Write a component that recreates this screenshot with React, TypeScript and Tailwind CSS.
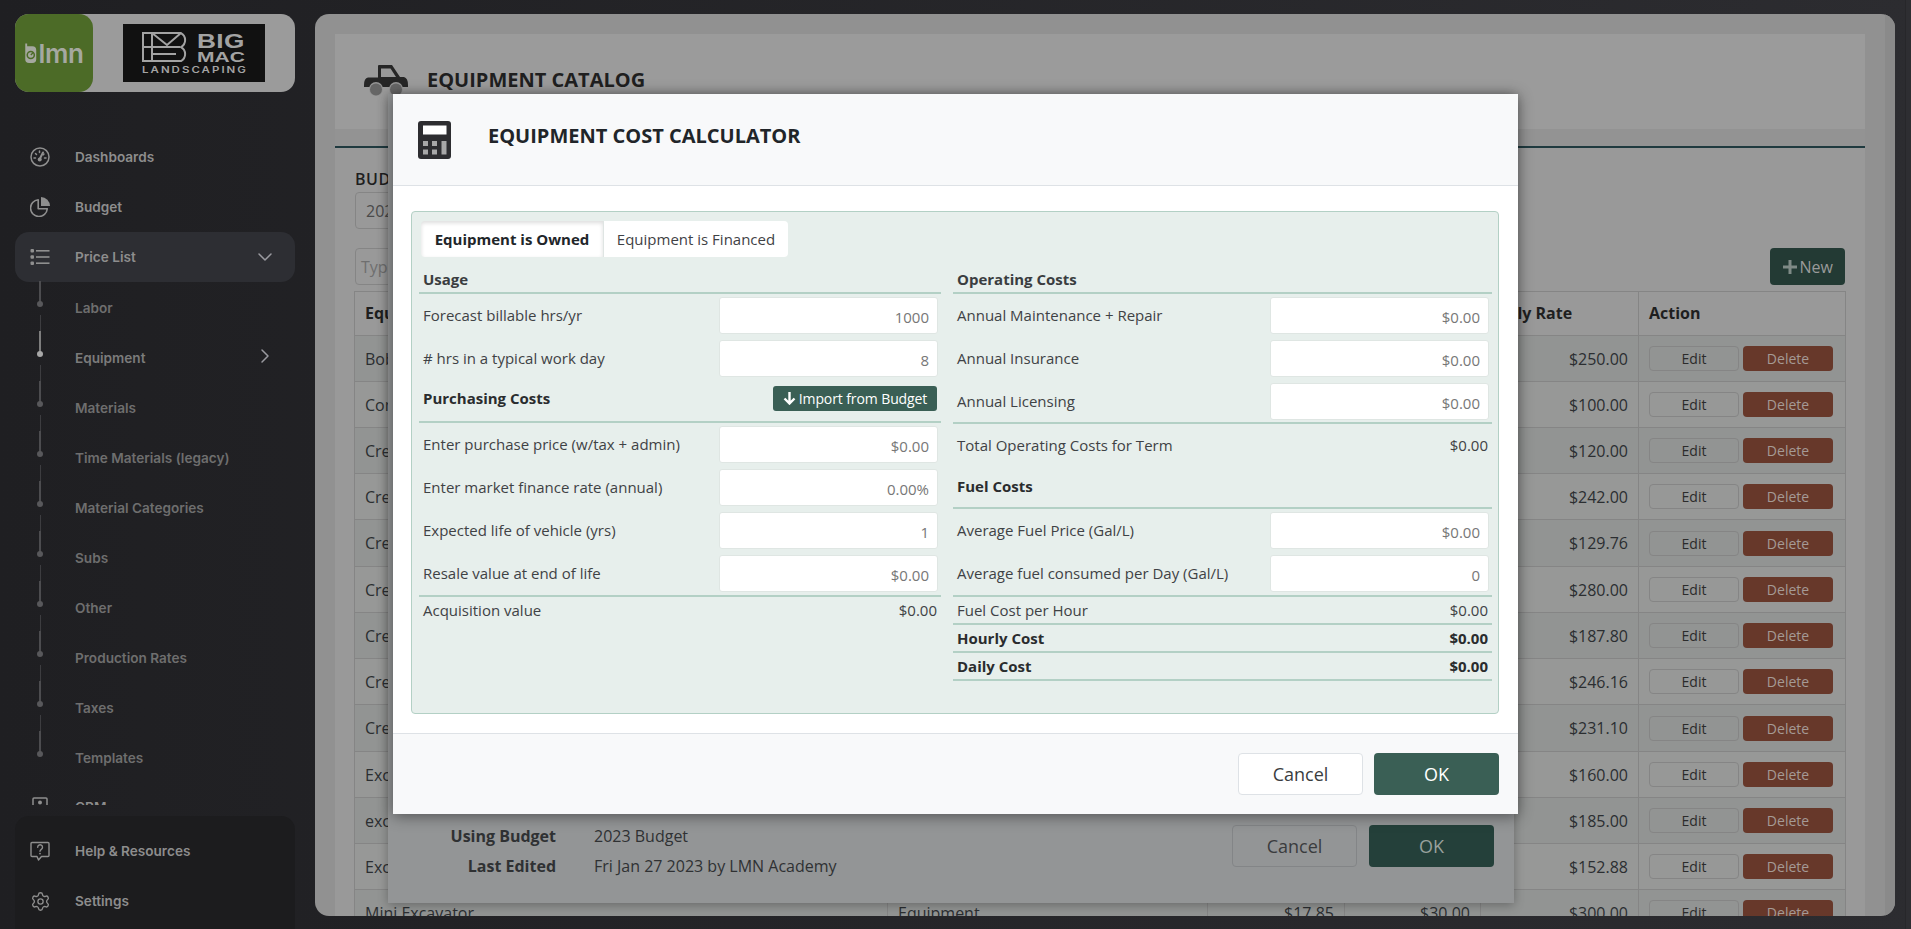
import React from "react";
import { ChevronDown, ChevronRight, Settings } from "lucide-react";

const GaugeIcon = () => (
  <svg width="20" height="20" viewBox="0 0 20 20" fill="none" stroke="#8f8f8f" strokeWidth="1.5">
    <circle cx="10" cy="10" r="9" />
    <path d="M10 11.500 L13 5.500" strokeWidth="2" strokeLinecap="round" />
    <circle cx="9.700" cy="12.500" r="2" fill="#8f8f8f" stroke="none" />
    <path d="M4 11h1.500M5.500 6.500l1 1M9.500 4v1.500M14 7l-.6.6M14.500 11H16" strokeLinecap="round" />
  </svg>
);

const PieIcon = () => (
  <svg width="20" height="20" viewBox="0 0 20 20" fill="none">
    <path d="M11 0a9 9 0 0 1 9 9h-9z" fill="#8f8f8f" />
    <path d="M8.200 2.700a8.400 8.400 0 1 0 9.100 9.100H8.200z" stroke="#8f8f8f" strokeWidth="1.600" strokeLinejoin="round" />
  </svg>
);

const ListIcon = () => (
  <svg width="20" height="18" viewBox="0 0 20 18" fill="#8f8f8f">
    <rect x="0.500" y="1" width="3.500" height="3.500" rx="1" />
    <rect x="0.500" y="7.200" width="3.500" height="3.500" rx="1" />
    <rect x="0.500" y="13.400" width="3.500" height="3.500" rx="1" />
    <rect x="6" y="2" width="13.500" height="1.600" />
    <rect x="6" y="8.200" width="13.500" height="1.600" />
    <rect x="6" y="14.400" width="13.500" height="1.600" />
  </svg>
);

const HelpIcon = () => (
  <svg width="20" height="20" viewBox="0 0 20 20" fill="none" stroke="#8f8f8f" strokeWidth="1.400">
    <path d="M2 1.500h16a1 1 0 0 1 1 1v12a1 1 0 0 1-1 1h-6.500L8.500 19l-1.500-3.500H2a1 1 0 0 1-1-1v-12a1 1 0 0 1 1-1z" strokeLinejoin="round" />
    <path d="M7.700 6.200a2.400 2.400 0 1 1 3.600 2.100c-.8.500-1.300 1-1.300 1.900" strokeLinecap="round" />
    <circle cx="10" cy="12.600" r=".9" fill="#8f8f8f" stroke="none" />
  </svg>
);

const CrmIcon = () => (
  <svg width="16" height="20" viewBox="0 0 16 20" fill="none" stroke="#8f8f8f" strokeWidth="1.500">
    <rect x="1" y="1" width="14" height="18" rx="1" />
    <circle cx="8" cy="5.500" r="2" fill="#8f8f8f" stroke="none" />
  </svg>
);

const LmnMark = () => (
  <svg width="13" height="21" viewBox="0 0 13 22" fill="none">
    <path d="M1 0.500h2v3h5.500a4 4 0 0 1 4 4V17a4 4 0 0 1-4 4H5a4 4 0 0 1-4-4z" fill="#a5a8a0" />
    <circle cx="6.800" cy="12.500" r="3.700" fill="none" stroke="#4c6b27" strokeWidth="1.600" />
    <path d="M6.800 12.500l2.600-2.600" stroke="#4c6b27" strokeWidth="1.400" />
  </svg>
);

const BigMacMark = () => (
  <svg width="48" height="30" viewBox="0 0 48 30" fill="none" stroke="#a3a3a3" strokeWidth="2">
    <path d="M1 1h38a8 8 0 0 1 0 14 8 8 0 0 1 0 14H1z" />
    <path d="M10 1v14h28M1 15h9M10 15v7h24M10 22v7M10 1l15 12L39 1" />
  </svg>
);

const TruckIcon = () => (
  <svg width="44" height="31" viewBox="0 0 44 31">
    <path d="M0 20Q0 13 4 12.500H14V1a1 1 0 0 1 1-1H28L36 12H40Q44 13 44 20V22H0z" fill="#262626" />
    <path d="M17 3.500H26.500L32 12H17z" fill="#999999" />
    <circle cx="12" cy="24" r="7" fill="#949494" />
    <circle cx="32" cy="24" r="7" fill="#949494" />
    <circle cx="12" cy="24.500" r="6" fill="#666666" />
    <circle cx="32" cy="24.500" r="6" fill="#666666" />
  </svg>
);

const CalculatorIcon = () => (
  <svg width="33" height="38" viewBox="0 0 33 38">
    <rect width="33" height="38" rx="3" fill="#2d2d30" />
    <rect x="5" y="4.500" width="23.500" height="9" fill="#ffffff" />
    <rect x="5" y="20" width="5" height="5" fill="#a8a8a8" />
    <rect x="14" y="20" width="5" height="5" fill="#a8a8a8" />
    <rect x="5" y="28.500" width="5" height="5" fill="#a8a8a8" />
    <rect x="14" y="28.500" width="5" height="5" fill="#a8a8a8" />
    <rect x="23.500" y="20" width="5" height="13.500" fill="#a8a8a8" />
  </svg>
);

const subItems = ["Labor", "Equipment", "Materials", "Time Materials (legacy)", "Material Categories", "Subs", "Other", "Production Rates", "Taxes", "Templates"];

const NavRow = ({ icon, label, active }: { icon: React.ReactNode; label: string; active?: boolean }) => (
  <div className={`flex h-[50px] items-center rounded-[14px] ${active ? "bg-[#2d2e33]" : ""}`}>
    <span className="flex w-[50px] shrink-0 justify-center">{icon}</span>
    <span className="ml-[10px] text-[13.6px] font-semibold text-[#8d8d8d]">{label}</span>
    {active && <ChevronDown className="ml-auto mr-[18px] text-[#9a9aa0]" size={24} strokeWidth={1.5} />}
  </div>
);

const Sidebar = () => (
  <aside className="flex h-[929px] w-[315px] shrink-0 flex-col pl-[15px] pr-[20px] pt-[14px] font-['Inter',sans-serif]">
    <div className="flex h-[78px] shrink-0 items-center rounded-[14px] bg-[#9b9b9b]">
      <div className="flex h-[78px] w-[78px] shrink-0 items-center justify-center gap-[1px] rounded-[14px] bg-[#4c6b27]">
        <LmnMark />
        <span className="text-[26px] font-semibold tracking-[-0.3px] text-[#a5a8a0]">lmn</span>
      </div>
      <div className="ml-[30px] flex h-[58px] w-[142px] flex-col bg-[#111111] pl-[19px] pt-[8px]">
        <div className="flex h-[30px] gap-[7px]">
          <BigMacMark />
          <div className="flex flex-col font-['Liberation_Sans',sans-serif] font-bold leading-none text-[#a3a3a3]">
            <span className="origin-left scale-x-[1.25] text-[21px] leading-[18px] tracking-[0.3px]">BIG</span>
            <span className="origin-left scale-x-[1.4] text-[15px] leading-[13px]">MAC</span>
          </div>
        </div>
        <span className="mt-[4px] origin-left scale-x-[1.35] text-[8.5px] font-semibold leading-[8px] tracking-[1.5px] text-[#a3a3a3]">LANDSCAPING</span>
      </div>
    </div>
    <nav className="mt-[40px] min-h-0 flex-1 overflow-hidden">
      <NavRow icon={<GaugeIcon />} label="Dashboards" />
      <NavRow icon={<PieIcon />} label="Budget" />
      <NavRow icon={<ListIcon />} label="Price List" active />
      {subItems.map((s, i) => {
        const on = s === "Equipment";
        return (
          <div key={s} className="relative flex h-[50px] items-center pl-[60px] pt-[2px]">
            {i > 0 && <span className="absolute left-[24.5px] top-[-17px] h-[16px] w-px bg-[#3d3d40]" />}
            <span className={`absolute left-[24px] top-[-1px] h-[23px] w-[2px] ${on ? "bg-[#7d7d7d]" : "bg-[#4c4c4f]"}`} />
            <span className={`absolute left-[22px] top-[19px] h-[6px] w-[6px] rounded-full ${on ? "bg-[#a8a8a8]" : "bg-[#58585b]"}`} />
            <span className={`text-[13.6px] font-semibold ${on ? "text-[#7b7b7b]" : "text-[#6e6e6e]"}`}>{s}</span>
            {on && <ChevronRight className="absolute right-[18px] top-[12px] text-[#9a9aa0]" size={24} strokeWidth={1.5} />}
          </div>
        );
      })}
      <NavRow icon={<CrmIcon />} label="CRM" />
    </nav>
    <div className="mt-[11px] shrink-0 rounded-t-[14px] bg-[#1c1c1e] pb-[3px] pt-[10px]">
      <NavRow icon={<HelpIcon />} label="Help & Resources" />
      <NavRow icon={<Settings color="#8f8f8f" size={21} strokeWidth={1.5} />} label="Settings" />
    </div>
  </aside>
);

const rows = [
  ["Bobcat", "$250.00"],
  ["Compact Loader", "$100.00"],
  ["Crew Truck 1", "$120.00"],
  ["Crew Truck 2", "$242.00"],
  ["Crew Truck 3", "$129.76"],
  ["Crew Truck 4", "$280.00"],
  ["Crew Truck 5", "$187.80"],
  ["Crew Truck 6", "$246.16"],
  ["Crew Truck 7", "$231.10"],
  ["Excavator", "$160.00"],
  ["excavator 2", "$185.00"],
  ["Excavator 3", "$152.88"],
  ["Mini Excavator", "$300.00"],
];

const td = "border border-[#858585] px-[10px]";
const th = "border border-[#858585] px-[10px] pb-[2px]";

const CatalogTable = () => (
  <table className="w-[1491px] table-fixed border-collapse text-[16px] text-[#2b2e31]">
    <colgroup>
      <col className="w-[533px]" />
      <col className="w-[320px]" />
      <col className="w-[137px]" />
      <col className="w-[136px]" />
      <col className="w-[158px]" />
      <col className="w-[207px]" />
    </colgroup>
    <thead>
      <tr className="h-[44px] bg-[#999999] text-left font-bold text-[#1f1f1f]">
        <th className={th}>Equipment</th>
        <th className={th}>Type</th>
        <th className={th}>Cost</th>
        <th className={th}>Hourly</th>
        <th className={th}>Daily Rate</th>
        <th className={th}>Action</th>
      </tr>
    </thead>
    <tbody>
      {rows.map((r, i) => (
        <tr key={r[0]} className={`${i === 4 || i === 8 ? "h-[47px]" : "h-[46px]"} ${i % 2 === 0 ? "bg-[#929493]" : "bg-[#979897]"}`}>
          <td className={td}>{r[0]}</td>
          <td className={td}>Equipment</td>
          <td className={`${td} text-right`}>$17.85</td>
          <td className={`${td} text-right`}>$30.00</td>
          <td className={`${td} text-right`}>{r[1]}</td>
          <td className={td}>
            <div className="flex gap-[4px]">
              <button className="h-[25px] w-[90px] rounded-[4px] border border-[#858585] text-[14px] text-[#2b2b2b]">Edit</button>
              <button className="h-[25px] w-[90px] rounded-[4px] bg-[#67382a] text-[14px] text-[#a59a95]">Delete</button>
            </div>
          </td>
        </tr>
      ))}
    </tbody>
  </table>
);

const Main = () => (
  <main className="relative mt-[14px] h-[902px] w-[1580px] shrink-0 overflow-hidden rounded-[14px] bg-[#919191] pl-[20px] pr-[30px] pt-[20px]">
    <div className="absolute right-0 top-0 h-full w-[10px] bg-[#8a8a8a]" />
    <div className="flex h-[95px] items-center bg-[#9b9b9b] pl-[29px]">
      <div className="mb-[3px]">
        <TruckIcon />
      </div>
      <h1 className="mb-[4px] ml-[19px] text-[20px] font-bold text-[#1f1f1f]">EQUIPMENT CATALOG</h1>
    </div>
    <div className="h-[19px] border-b-2 border-[#1f3a3f] bg-[#939393]" />
    <div className="h-[800px] bg-[#999999] px-[20px] pt-[21px]">
      <div className="text-[16px] font-semibold leading-[20px] tracking-[0.5px] text-[#1f1f1f]">BUDGET</div>
      <div className="mt-[3px] flex h-[37px] w-[300px] items-center rounded-[4px] border border-[#858585] px-[10px] text-[16px] text-[#4a4a4a]">2023 Budget</div>
      <div className="mt-[19px] flex items-center justify-between">
        <div className="flex h-[37px] w-[400px] items-center rounded-[4px] border border-[#858585] px-[5px] text-[16px] text-[#6f6f6f]">Type to search</div>
        <button className="flex h-[37px] w-[75px] items-center justify-end gap-[3px] rounded-[4px] bg-[#233a34] pr-[12px] text-[16px] text-[#9a9a9a]">
          <svg width="14" height="14" viewBox="0 0 14 14" fill="#7f8a86"><path d="M5.500 0h3v5.500H14v3H8.500V14h-3V8.500H0v-3h5.500z" /></svg>
          New
        </button>
      </div>
      <div className="-ml-px mt-[6px]">
        <CatalogTable />
      </div>
    </div>
  </main>
);

const Field = ({ label, value, short }: { label: string; value: string; short?: boolean }) => (
  <div className={`flex items-center justify-between pl-[4px] pr-[3px] ${short ? "h-[42px]" : "h-[43px]"}`}>
    <span className="text-[#3f4245]">{label}</span>
    <input
      readOnly
      value={value}
      className="h-[37px] w-[219px] rounded-[3px] border border-[#dfe6e3] bg-white pr-[8px] pt-[3px] text-right text-[#777777] outline-none"
    />
  </div>
);

const Line = ({ l, r, bold, cls }: { l: string; r: string; bold?: boolean; cls: string }) => (
  <div className={`flex items-center justify-between px-[4px] ${cls} ${bold ? "font-bold text-[#2a2c2e]" : "text-[#3f4245]"}`}>
    <span>{l}</span>
    <span>{r}</span>
  </div>
);

const lineColor = "border-[#b3d0c5]";

const CostModal = () => (
  <div className="absolute left-[78px] top-[94px] h-[720px] w-[1125px] bg-white text-[15px] shadow-[0_2px_14px_rgba(0,0,0,0.45)]">
    <div className="flex h-[92px] items-center border-b border-[#dee2e6] bg-[#f8f9fa] pl-[25px]">
      <CalculatorIcon />
      <h2 className="mb-[8px] ml-[37px] text-[20px] font-bold text-[#212529]">EQUIPMENT COST CALCULATOR</h2>
    </div>
    <div className="ml-[18px] mr-[19px] mt-[25px] h-[503px] rounded-[4px] border border-[#b3d0c5] bg-[#e7efec] pl-[7px] pt-[9px]">
      <div className="ml-[2px] flex h-[36px] w-[367px] overflow-hidden rounded-[4px] bg-white">
        <div className="flex w-[183px] items-center justify-center border-r border-[#dfe5e3] font-bold text-[#212529] shadow-[inset_0_2px_4px_rgba(0,0,0,0.14)]">Equipment is Owned</div>
        <div className="flex flex-1 items-center justify-center text-[#3f4245]">Equipment is Financed</div>
      </div>
      <div className="grid grid-cols-[522px_539px] gap-x-[12px]">
        <div>
          <div className={`flex h-[37px] items-center border-b-2 px-[4px] pt-[10px] font-bold text-[#3a3d40] ${lineColor}`}>Usage</div>
          <Field label="Forecast billable hrs/yr" value="1000" />
          <Field label="# hrs in a typical work day" value="8" />
          <div className={`flex h-[43px] items-center justify-between border-b-2 pb-[4px] pl-[4px] pr-[4px] ${lineColor}`}>
            <span className="font-bold text-[#2a2c2e]">Purchasing Costs</span>
            <button className="flex h-[25px] w-[164px] items-center justify-center gap-[3px] rounded-[3px] bg-[#3a5f55] text-[14px] tracking-[-0.1px] text-white">
              <svg width="13" height="13" viewBox="0 0 13 13" fill="none" stroke="#fff" strokeWidth="2.400"><path d="M6.500 0v11M1.500 6.500l5 5 5-5" /></svg>
              Import from Budget
            </button>
          </div>
          <Field label="Enter purchase price (w/tax + admin)" value="$0.00" />
          <Field label="Enter market finance rate (annual)" value="0.00%" />
          <Field label="Expected life of vehicle (yrs)" value="1" />
          <Field label="Resale value at end of life" value="$0.00" />
          <Line l="Acquisition value" r="$0.00" cls={`h-[30px] border-t-2 pb-[2px] ${lineColor}`} />
        </div>
        <div>
          <div className={`flex h-[37px] items-center border-b-2 px-[4px] pt-[10px] font-bold text-[#3a3d40] ${lineColor}`}>Operating Costs</div>
          <Field label="Annual Maintenance + Repair" value="$0.00" />
          <Field label="Annual Insurance" value="$0.00" />
          <Field label="Annual Licensing" value="$0.00" short />
          <Line l="Total Operating Costs for Term" r="$0.00" cls={`h-[45px] border-t-2 pb-[1px] ${lineColor}`} />
          <div className={`flex h-[42px] items-center border-b-2 px-[4px] pb-[2px] font-bold text-[#2a2c2e] ${lineColor}`}>Fuel Costs</div>
          <Field label="Average Fuel Price (Gal/L)" value="$0.00" />
          <Field label="Average fuel consumed per Day (Gal/L)" value="0" />
          <Line l="Fuel Cost per Hour" r="$0.00" cls={`h-[30px] border-y-2 ${lineColor}`} />
          <Line l="Hourly Cost" r="$0.00" bold cls={`h-[28px] border-b-2 ${lineColor}`} />
          <Line l="Daily Cost" r="$0.00" bold cls={`h-[28px] border-b-2 ${lineColor}`} />
        </div>
      </div>
    </div>
    <div className="mt-[19px] flex h-[81px] justify-end gap-[11px] border-t border-[#dee2e6] bg-[#f8f9fa] pr-[19px] pt-[19px]">
      <button className="h-[42px] w-[125px] rounded-[4px] border border-[#dee2e6] bg-white text-[18px] text-[#3a3d40]">Cancel</button>
      <button className="h-[42px] w-[125px] rounded-[4px] bg-[#3a5f55] text-[18px] font-medium text-white">OK</button>
    </div>
  </div>
);

const BudgetModalBehind = () => (
  <div className="absolute left-[73px] top-[94px] h-[809px] w-[1126px] bg-[#939596] shadow-[0_2px_10px_rgba(0,0,0,0.3)]">
    <div className="absolute bottom-0 left-0 right-0 h-[89px] text-[16px] text-[#2f3133]">
      <div className="grid grid-cols-[168px_auto] gap-x-[38px] gap-y-[6px] pt-[10px] leading-[24px]">
        <span className="text-right font-bold">Using Budget</span>
        <span>2023 Budget</span>
        <span className="text-right font-bold">Last Edited</span>
        <span>Fri Jan 27 2023 by LMN Academy</span>
      </div>
      <div className="absolute right-[20px] top-[11px] flex gap-[12px]">
        <button className="h-[42px] w-[125px] rounded-[4px] border border-[#838587] text-[18px] text-[#3a3c3e]">Cancel</button>
        <button className="h-[42px] w-[125px] rounded-[4px] bg-[#24403a] text-[18px] text-[#98a09d]">OK</button>
      </div>
    </div>
  </div>
);

export default function App() {
  return (
    <div className="relative flex h-[929px] w-[1911px] overflow-hidden bg-[linear-gradient(90deg,#1f1f22,#2c2c30)] font-['Open_Sans',sans-serif]">
      <Sidebar />
      <div className="relative">
        <Main />
        <BudgetModalBehind />
        <CostModal />
      </div>
      <div className="absolute right-0 top-0 h-full w-[6px] border-l border-[#27272a] bg-[#2e2e32]" />
    </div>
  );
}
